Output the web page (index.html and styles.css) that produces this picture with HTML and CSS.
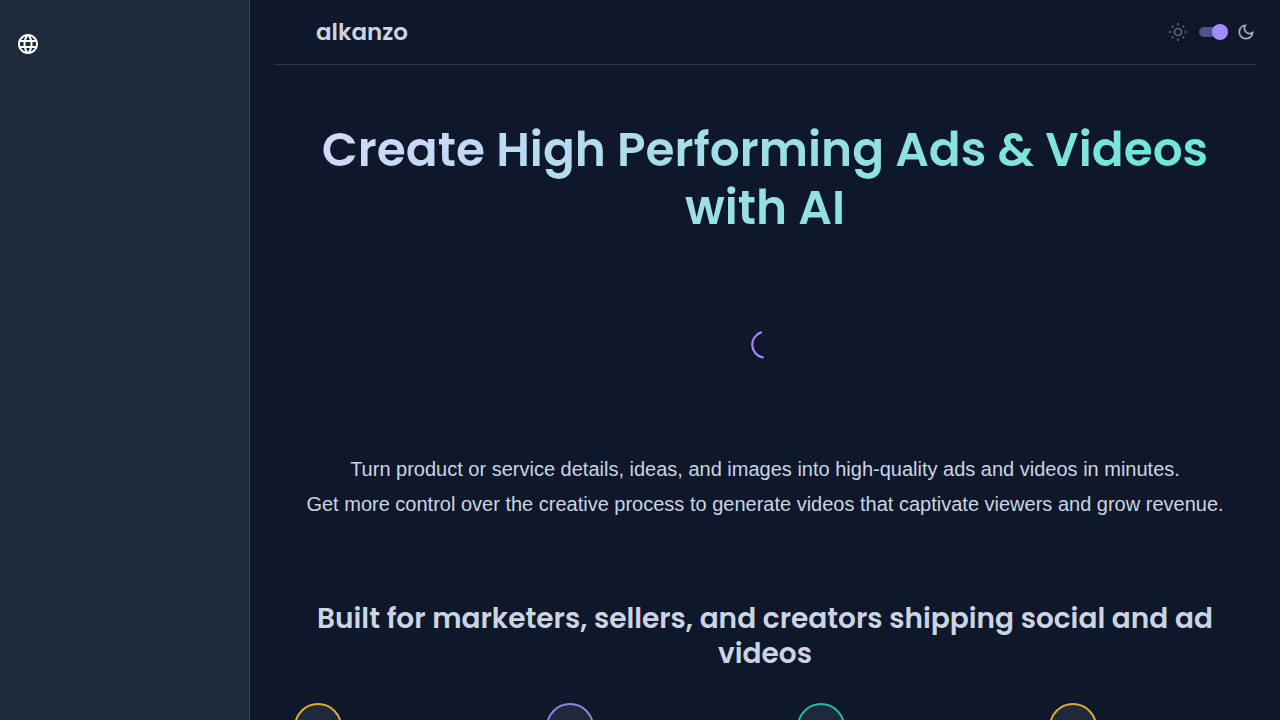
FILE: index.html
```html
<!DOCTYPE html>
<html lang="en">
<head>
    <meta charset="UTF-8">
    <meta name="viewport" content="width=device-width, initial-scale=1.0">
    <title>alkanzo</title>
    <link rel="stylesheet" href="styles.css">
</head>
<body>
    <div class="app">
        <aside class="sidebar">
            <button class="lang-btn" type="button" aria-label="Language">
                <svg viewBox="0 0 24 24" width="24" height="24" fill="currentColor">
                    <path d="M11.99 2C6.47 2 2 6.48 2 12s4.47 10 9.99 10C17.52 22 22 17.52 22 12S17.52 2 11.99 2zm6.93 6h-2.95c-.32-1.25-.78-2.45-1.38-3.56 1.84.63 3.37 1.91 4.33 3.56zM12 4.04c.83 1.2 1.48 2.53 1.91 3.96h-3.82c.43-1.43 1.08-2.76 1.91-3.96zM4.26 14C4.1 13.36 4 12.69 4 12s.1-1.36.26-2h3.38c-.08.66-.14 1.32-.14 2s.06 1.34.14 2H4.26zm.82 2h2.95c.32 1.25.78 2.45 1.38 3.56-1.84-.63-3.37-1.9-4.33-3.56zm2.95-8H5.08c.96-1.66 2.49-2.93 4.33-3.56C8.81 5.55 8.35 6.75 8.03 8zM12 19.96c-.83-1.2-1.48-2.53-1.91-3.96h3.82c-.43 1.43-1.08 2.76-1.91 3.96zM14.34 14H9.66c-.09-.66-.16-1.32-.16-2s.07-1.35.16-2h4.68c.09.65.16 1.32.16 2s-.07 1.34-.16 2zm.25 5.56c.6-1.11 1.06-2.31 1.38-3.56h2.95c-.96 1.65-2.49 2.93-4.33 3.56zM16.36 14c.08-.66.14-1.32.14-2s-.06-1.34-.14-2h3.38c.16.64.26 1.31.26 2s-.1 1.36-.26 2h-3.38z"/>
                </svg>
            </button>
        </aside>

        <main class="main">
            <header class="header">
                <a class="brand" href="#">alkanzo</a>
                <div class="theme">
                    <svg class="sun" viewBox="0 0 20 20" width="20" height="20" fill="none" stroke="currentColor" stroke-width="1.7">
                        <circle cx="10" cy="10" r="3.5"/>
                        <path d="M10 .9v2.6M10 16.5v2.6M.9 10h2.6M16.5 10h2.6M3.9 3.9l1.6 1.6M14.5 14.5l1.6 1.6M3.9 16.1l1.6-1.6M14.5 5.5l1.6-1.6"/>
                    </svg>
                    <input class="switch" type="checkbox" aria-label="Dark mode" checked>
                    <svg class="moon" viewBox="0 0 24 24" width="20" height="20" fill="currentColor">
                        <path d="M9.37 5.51c-.18.64-.27 1.31-.27 1.99 0 4.08 3.32 7.4 7.4 7.4.68 0 1.35-.09 1.99-.27C17.45 17.19 14.93 19 12 19c-3.86 0-7-3.14-7-7 0-2.93 1.81-5.45 4.37-6.49M12 3c-4.97 0-9 4.03-9 9s4.03 9 9 9 9-4.03 9-9c0-.46-.04-.92-.1-1.36-.98 1.37-2.58 2.26-4.4 2.26-2.98 0-5.4-2.42-5.4-5.4 0-1.81.89-3.42 2.26-4.4-.44-.06-.9-.1-1.36-.1z"/>
                    </svg>
                </div>
            </header>

            <section class="hero">
                <h1>Create High Performing Ads &amp; Videos with AI</h1>
                <div class="loader" role="status" aria-label="Loading">
                    <svg viewBox="0 0 28 28" width="28" height="28" fill="none" stroke="currentColor" stroke-width="2.2" stroke-linecap="round">
                        <path d="M10 1.4A13 13 0 0 0 11.6 26.4"/>
                    </svg>
                </div>
                <p>Turn product or service details, ideas, and images into high-quality ads and videos in minutes.<br>Get more control over the creative process to generate videos that captivate viewers and grow revenue.</p>
            </section>

            <section class="audience">
                <h2>Built for marketers, sellers, and creators shipping social and ad videos</h2>
                <div class="cards">
                    <div class="card"><span class="badge amber"></span></div>
                    <div class="card"><span class="badge violet"></span></div>
                    <div class="card"><span class="badge teal"></span></div>
                    <div class="card"><span class="badge amber"></span></div>
                </div>
            </section>
        </main>
    </div>
</body>
</html>
```

FILE: styles.css
```css
* {
    box-sizing: border-box;
}

body {
    margin: 0;
    background: #0f172a;
    color: #cbd5e1;
    font-family: "Liberation Sans", Arial, sans-serif;
}

.app {
    display: flex;
    height: 100vh;
    overflow: hidden;
}

.sidebar {
    flex: 0 0 250px;
    padding: 24px 8px;
    background: #1e293b;
    border-right: 1px solid #3b4659;
}

.lang-btn {
    display: flex;
    padding: 8px;
    border: 0;
    background: none;
    color: #fff;
    cursor: pointer;
}

.main {
    flex: 1;
    min-width: 0;
    padding: 0 24px;
    overflow-y: auto;
    scrollbar-width: none;
}

.header {
    display: flex;
    align-items: center;
    justify-content: space-between;
    height: 65px;
    padding-left: 42px;
    border-bottom: 1px solid #2d374a;
}

.brand {
    color: #cbd5e1;
    font: 600 23px/32px Poppins, Inter, sans-serif;
    text-decoration: none;
}

.theme {
    display: flex;
    align-items: center;
    gap: 8px;
}

.sun {
    color: #5b6577;
}

.moon {
    color: #a3aec0;
}

.switch {
    appearance: none;
    display: flex;
    align-items: center;
    justify-content: flex-end;
    width: 29px;
    height: 10px;
    margin: 0 0 0 3px;
    border-radius: 5px;
    background: #544e92;
    cursor: pointer;
}

.switch::before {
    content: "";
    flex: none;
    width: 16px;
    height: 16px;
    border-radius: 50%;
    background: #a08bfa;
}

.switch:not(:checked) {
    justify-content: flex-start;
}

.hero {
    padding-top: 56px;
    text-align: center;
}

h1 {
    margin: 0;
    font: 600 47px/58px Poppins, Inter, sans-serif;
    background: linear-gradient(135deg, #ddd6fe 0%, #99dfe6 50%, #5eead4 100%);
    background-clip: text;
    -webkit-background-clip: text;
    color: transparent;
}

.loader {
    display: flex;
    align-items: center;
    justify-content: center;
    height: 215px;
    color: #a08bfa;
}

.hero p {
    margin: 0;
    font-size: 20px;
    line-height: 35px;
}

h2 {
    margin: 79px 0 32px;
    font: 600 28px/35px Poppins, Inter, sans-serif;
    text-align: center;
}

.cards {
    display: grid;
    grid-template-columns: repeat(4, 1fr);
    gap: 24px;
}

.card {
    padding: 0 20px 24px;
}

.badge {
    display: block;
    width: 48px;
    height: 48px;
    border: 2px solid;
    border-radius: 50%;
    background: #1e293b;
}

.amber {
    border-color: #e0ac2c;
}

.violet {
    border-color: #9481e6;
}

.teal {
    border-color: #2db8a8;
}
```
